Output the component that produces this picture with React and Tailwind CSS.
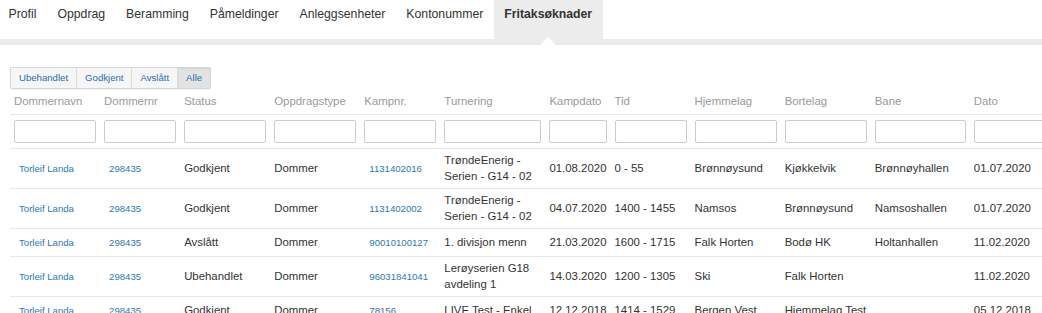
import React from 'react';

const tabs = ['Profil', 'Oppdrag', 'Beramming', 'Påmeldinger', 'Anleggsenheter', 'Kontonummer', 'Fritaksøknader'];

const filters = ['Ubehandlet', 'Godkjent', 'Avslått', 'Alle'];

const columns = [
  { label: 'Dommernavn', w: 'w-[90px]' },
  { label: 'Dommernr', w: 'w-[80px]' },
  { label: 'Status', w: 'w-[90px]' },
  { label: 'Oppdragstype', w: 'w-[90px]' },
  { label: 'Kampnr.', w: 'w-[80px]' },
  { label: 'Turnering', w: 'w-[105px]' },
  { label: 'Kampdato', w: 'w-[65px]' },
  { label: 'Tid', w: 'w-[80px]' },
  { label: 'Hjemmelag', w: 'w-[90px]' },
  { label: 'Bortelag', w: 'w-[90px]' },
  { label: 'Bane', w: 'w-[99px]' },
  { label: 'Dato', w: 'w-[100px]' },
];

const rows = [
  ['Torleif Landa', '298435', 'Godkjent', 'Dommer', '1131402016', 'TrøndeEnerig - Serien - G14 - 02', '01.08.2020', '0 - 55', 'Brønnøysund', 'Kjøkkelvik', 'Brønnøyhallen', '01.07.2020'],
  ['Torleif Landa', '298435', 'Godkjent', 'Dommer', '1131402002', 'TrøndeEnerig - Serien - G14 - 02', '04.07.2020', '1400 - 1455', 'Namsos', 'Brønnøysund', 'Namsoshallen', '01.07.2020'],
  ['Torleif Landa', '298435', 'Avslått', 'Dommer', '90010100127', '1. divisjon menn', '21.03.2020', '1600 - 1715', 'Falk Horten', 'Bodø HK', 'Holtanhallen', '11.02.2020'],
  ['Torleif Landa', '298435', 'Ubehandlet', 'Dommer', '96031841041', 'Lerøyserien G18 avdeling 1', '14.03.2020', '1200 - 1305', 'Ski', 'Falk Horten', '', '11.02.2020'],
  ['Torleif Landa', '298435', 'Godkjent', 'Dommer', '78156', 'LIVE Test - Enkel', '12.12.2018', '1414 - 1529', 'Bergen Vest', 'Hjemmelag Test', '', '05.12.2018'],
];

const linkCols = [0, 1, 4];

const App = () => {
  return (
    <div className="w-[1042px] h-[313px] overflow-hidden bg-white font-['Liberation_Sans',Arial,sans-serif] text-[#333]">
      <div className="flex h-[39px] -ml-[2px]">
        {tabs.map((t, i) => {
          const active = i === tabs.length - 1;
          return (
            <div
              key={t}
              className={
                'relative px-[10.5px] pt-[5px] text-[12.25px] leading-[18px] ' +
                (active ? 'bg-[#ececec] font-bold text-[#333]' : 'text-[#333]')
              }
            >
              {t}
              {active && (
                <span className="absolute left-1/2 -translate-x-1/2 bottom-[-6px] w-0 h-0 border-x-8 border-x-transparent border-b-8 border-b-white z-10"></span>
              )}
            </div>
          );
        })}
      </div>
      <div className="h-[6px] bg-[#ebebeb]"></div>

      <div className="pl-[10px] pt-[22px]">
        <div className="flex w-fit h-[22px] border border-[#d6d6d6] rounded-[2px] bg-[#f6f6f6] shadow-[0_1px_1px_rgba(0,0,0,0.06)]">
          {filters.map((f, i) => (
            <div
              key={f}
              className={
                'flex items-center px-[8px] text-[9.6px] text-[#2a6fb0] ' +
                (i > 0 ? 'border-l border-[#dcdcdc] ' : '') +
                (f === 'Alle' ? 'bg-[#e3e3e3] shadow-[inset_0_1px_2px_rgba(0,0,0,0.08)]' : '')
              }
            >
              {f}
            </div>
          ))}
        </div>

        <table className="table-fixed border-collapse w-[1060px] text-[11.4px]">
          <colgroup>
            {columns.map((c) => (
              <col key={c.label} className={c.w} />
            ))}
          </colgroup>
          <thead>
            <tr className="border-b border-[#e6e6e6]">
              {columns.map((c) => (
                <th key={c.label} className="h-[25px] px-[4px] text-left font-normal text-[#9a9a9a] leading-[16px] align-middle">
                  {c.label}
                </th>
              ))}
            </tr>
            <tr className="border-b border-[#e6e6e6]">
              {columns.map((c) => (
                <th key={c.label} className="h-[34px] px-[4px] align-middle">
                  <input className="block w-full h-[23px] border border-[#cccccc] rounded-[2px] bg-white" />
                </th>
              ))}
            </tr>
          </thead>
          <tbody>
            {rows.map((r, ri) => (
              <tr key={ri} className="border-b border-[#e8e8e8]">
                {r.map((cell, ci) => (
                  <td key={ci} className="h-[28px] px-[4px] py-[3.5px] align-middle leading-[16px]">
                    {linkCols.includes(ci) ? (
                      <a className="pl-[5px] text-[9.6px] text-[#2a7ab8]">{cell}</a>
                    ) : (
                      cell
                    )}
                  </td>
                ))}
              </tr>
            ))}
          </tbody>
        </table>
      </div>
    </div>
  );
};

export default App;
